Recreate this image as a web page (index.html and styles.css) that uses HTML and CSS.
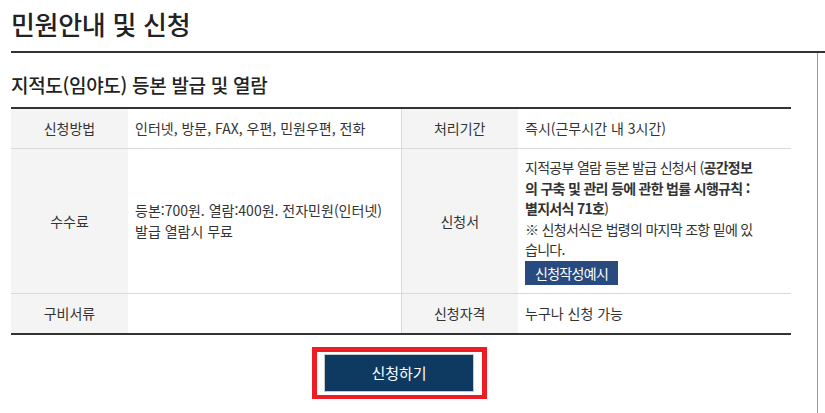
FILE: index.html
```html
<!DOCTYPE html>
<html lang="ko">
<head>
    <meta charset="UTF-8">
    <meta name="viewport" content="width=device-width, initial-scale=1.0">
    <title>민원안내 및 신청</title>
    <link rel="stylesheet" href="styles.css">
</head>
<body>
    <div class="page">
        <div class="page-title">
            <h1>민원안내 및 신청</h1>
        </div>
        <div class="content">
            <h2>지적도(임야도) 등본 발급 및 열람</h2>
            <table class="info-table">
                <colgroup>
                    <col class="col-th">
                    <col class="col-td">
                    <col class="col-th">
                    <col class="col-td">
                </colgroup>
                <tr class="row-short">
                    <th>신청방법</th>
                    <td>인터넷, 방문, FAX, 우편, 민원우편, 전화</td>
                    <th>처리기간</th>
                    <td>즉시(근무시간 내 3시간)</td>
                </tr>
                <tr>
                    <th>수수료</th>
                    <td>등본:700원. 열람:400원. 전자민원(인터넷)<br>발급 열람시 무료</td>
                    <th>신청서</th>
                    <td class="td-form">
                        지적공부 열람 등본 발급 신청서 (<b>공간정보<br>의 구축 및 관리 등에 관한 법률 시행규칙 :<br>별지서식 71호</b>)<br>
                        ※ 신청서식은 법령의 마지막 조항 밑에 있<br>습니다.<br>
                        <a href="#" class="btn-sample">신청작성예시</a>
                    </td>
                </tr>
                <tr class="row-short">
                    <th>구비서류</th>
                    <td></td>
                    <th>신청자격</th>
                    <td>누구나 신청 가능</td>
                </tr>
            </table>
            <div class="apply">
                <div class="apply-mark">
                    <a href="#" class="btn-apply">신청하기</a>
                </div>
            </div>
        </div>
    </div>
</body>
</html>
```

FILE: styles.css
```css
body {
    margin: 0;
    padding: 0;
    background-color: #fff;
    font-family: "Noto Sans CJK KR", "Noto Sans", sans-serif;
    color: #333;
}
.page {
    padding-left: 11px;
}
.page-title {
    border-bottom: 2px solid #333;
    height: 53px;
    box-sizing: border-box;
}
.page-title h1 {
    margin: 0;
    padding-top: 7px;
    font-size: 26px;
    line-height: 34px;
    font-weight: 500;
    color: #222;
    letter-spacing: -0.3px;
}
.content {
    width: 806px;
    border-right: 1px solid #999;
    padding-top: 19px;
    padding-bottom: 14px;
}
.content h2 {
    margin: 0 0 9px;
    font-size: 19px;
    font-weight: 500;
    line-height: 26px;
    color: #222;
    letter-spacing: -0.3px;
}
.info-table {
    width: 780px;
    border-collapse: collapse;
    table-layout: fixed;
    border-top: 2px solid #333;
    border-bottom: 2px solid #333;
    font-size: 14px;
    line-height: 20.5px;
}
.col-th {
    width: 117px;
}
.col-td {
    width: 273px;
}
.info-table th,
.info-table td {
    border-bottom: 1px solid #d9d9d9;
    padding: 8px 7px;
    vertical-align: middle;
}
.info-table th {
    background-color: #f4f4f4;
    font-weight: normal;
    text-align: center;
    color: #333;
}
.info-table td {
    text-align: left;
    color: #333;
}
.info-table td + th {
    border-left: 1px solid #d9d9d9;
}
.row-short th,
.row-short td {
    height: 23px;
}
.td-form {
    letter-spacing: -0.7px;
    white-space: nowrap;
}
.info-table b {
    font-weight: bold;
}
.btn-sample {
    display: inline-block;
    margin-top: 1px;
    padding: 0 10px;
    height: 24px;
    line-height: 24px;
    background-color: #284a7e;
    color: #fff;
    text-decoration: none;
    font-size: 14px;
}
.apply {
    display: flex;
    justify-content: center;
    width: 780px;
    padding-top: 12px;
}
.apply-mark {
    border: 5px solid #ee1c25;
    border-bottom-width: 4px;
    padding: 2px 8px 3px 7px;
    margin-right: 3px;
}
.btn-apply {
    display: block;
    width: 148px;
    height: 36px;
    line-height: 36px;
    border: 1px solid #c8c8c8;
    background-color: #0e3a62;
    color: #fff;
    text-align: center;
    text-decoration: none;
    font-size: 15px;
}
```
